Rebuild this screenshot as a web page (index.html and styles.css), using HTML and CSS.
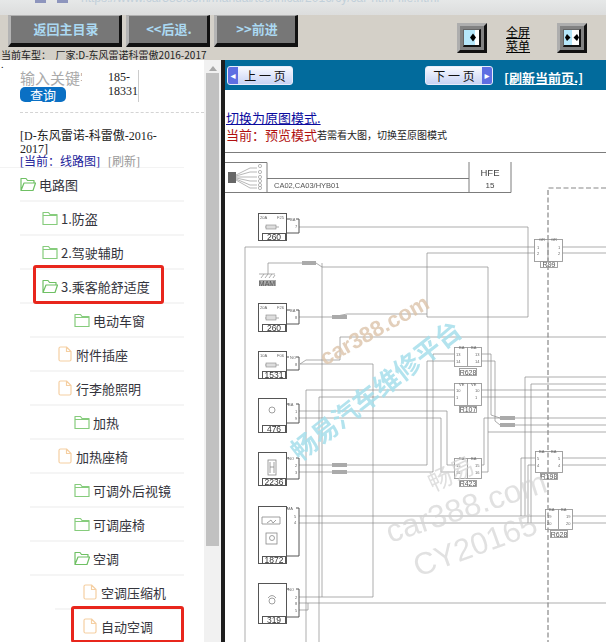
FILE: index.html
```html
<!DOCTYPE html>
<html lang="zh">
<head>
<meta charset="utf-8">
<title>线路图</title>
<link rel="stylesheet" href="styles.css">
</head>
<body>
<svg class="defs" width="0" height="0" aria-hidden="true">
  <symbol id="closed" viewBox="0 0 16 16"><path d="M1 14.500V2.500H6.500L8 4.500H15V14.500Z M1 5.500H15" fill="none" stroke="#86cc7c" stroke-width="1.200" stroke-linejoin="round"/></symbol>
  <symbol id="open" viewBox="0 0 16 16"><path d="M1 14.500V2.500H6L7.500 4.500H14V7 M1 14.500L4 7H15.500L13 14.500Z" fill="none" stroke="#6fc064" stroke-width="1.200" stroke-linejoin="round"/></symbol>
  <symbol id="file" viewBox="0 0 14 16"><path d="M1 2.500Q1 1 2.500 1H8.500L13 5.500V13.500Q13 15 11.500 15H2.500Q1 15 1 13.500Z M8.500 1V5.500H13" fill="none" stroke="#f5cfa2" stroke-width="1.200" stroke-linejoin="round"/></symbol>
</svg>
<div class="page">
  <div class="addr">
    <i class="addr-ico"></i><i class="addr-ico"></i>
    <span class="addr-text">https://www.car388.com/manual/technical/2016/cy/car-html-file.html</span>
  </div>
  <header class="toolbar">
    <div class="tool-left">
      <nav class="btns">
        <a class="btn btn-main">返回主目录</a>
        <a class="btn btn-nav">&lt;&lt;后退.</a>
        <a class="btn btn-nav">&gt;&gt;前进</a>
      </nav>
      <div class="car">当前车型：&nbsp;&nbsp;厂家:D-东风雷诺科雷傲2016-2017</div>
    </div>
    <div class="tool-right">
      <span class="win"><span class="win-in win-one"><svg width="6" height="9" viewBox="0 0 6 9"><path d="M0 4.500L3 0.500L6 4.500L3 8.500Z" fill="#000"/></svg></span></span>
      <a class="full"><span class="full-l">全屏</span><span class="full-l">菜单</span></a>
      <span class="win"><span class="win-in win-two"><svg width="14" height="9" viewBox="0 0 14 9"><path d="M0 4.500L2 1L5.500 4.500L2 8Z M14 4.500L12 1L8.500 4.500L12 8Z" fill="#000"/></svg></span></span>
    </div>
  </header>
  <main class="main">
    <aside class="side">
      <div class="dot">.</div>
      <div class="search">
        <div class="search-l">
          <div class="kw">输入关键字</div>
          <a class="query">查询</a>
        </div>
        <div class="phone">185-<br>18331</div>
      </div>
      <div class="crumb">
        <div class="crumb-t">[D-东风雷诺-科雷傲-2016-2017]</div>
        <div><a class="now">[当前：线路图]</a> <a class="refresh">[刷新]</a></div>
      </div>
      <ul class="tree">
        <li class="row l0"><svg class="ico"><use href="#open"/></svg>电路图</li>
        <li class="row l1"><svg class="ico"><use href="#closed"/></svg>1.防盗</li>
        <li class="row l1"><svg class="ico"><use href="#closed"/></svg>2.驾驶辅助</li>
        <li class="row l1"><svg class="ico"><use href="#open"/></svg>3.乘客舱舒适度<span class="mark mark-a"></span></li>
        <li class="row l2"><svg class="ico"><use href="#closed"/></svg>电动车窗</li>
        <li class="row l3"><svg class="ico-f"><use href="#file"/></svg>附件插座</li>
        <li class="row l3"><svg class="ico-f"><use href="#file"/></svg>行李舱照明</li>
        <li class="row l2"><svg class="ico"><use href="#closed"/></svg>加热</li>
        <li class="row l3"><svg class="ico-f"><use href="#file"/></svg>加热座椅</li>
        <li class="row l2"><svg class="ico"><use href="#closed"/></svg>可调外后视镜</li>
        <li class="row l2"><svg class="ico"><use href="#closed"/></svg>可调座椅</li>
        <li class="row l2"><svg class="ico"><use href="#open"/></svg>空调</li>
        <li class="row l4"><svg class="ico-f"><use href="#file"/></svg>空调压缩机</li>
        <li class="row l4"><svg class="ico-f"><use href="#file"/></svg>自动空调<span class="mark mark-b"></span></li>
      </ul>
    </aside>
    <div class="scroll"><span class="up"></span><span class="thumb"></span></div>
    <div class="split"></div>
    <section class="content">
      <div class="bar">
        <a class="pg pg-prev"><b class="arr">◂</b><span>上 一 页</span></a>
        <a class="pg pg-next"><span>下 一 页</span><b class="arr">▸</b></a>
        <a class="reload">[刷新当前页.]</a>
      </div>
      <a class="switch">切换为原图模式.</a>
      <div class="mode"><span class="mode-r">当前：预览模式</span><span class="mode-s">若需看大图，切换至原图模式</span></div>
      <svg class="dia" width="381" height="490" viewBox="225 152 381 490">
        <g class="frame">
          <path d="M225 152.500H606 M225 162.500H267V192.500H225 M267 178.500H469 M267 192.500H511V162 M469 162V192.500"/>
        </g>
        <g class="conn">
          <rect x="228" y="172" width="8" height="11" fill="#666" stroke="none"/>
          <path d="M236 175L250 168H257 M236 176L250 172H257 M236 177H257 M236 178L250 181H257 M236 179L250 185H257 M236 180L250 188H257"/>
          <circle cx="260" cy="166" r="1.600"/><circle cx="260" cy="172" r="1.600"/><circle cx="260" cy="177" r="1.600"/><circle cx="260" cy="181" r="1.600"/><circle cx="260" cy="185" r="1.600"/><circle cx="260" cy="188" r="1.600"/>
        </g>
        <text class="t7" x="274" y="188">CA02,CA03/HYB01</text>
        <text class="t9" x="490" y="176" text-anchor="middle">HFE</text>
        <text class="t8" x="490" y="188" text-anchor="middle">15</text>

        <g class="wire">
          <path d="M299 227H528V317H427 M427 253V317 M427 253H535 M427 314H347L332 317H299"/>
          <path d="M245 642V247H535 M562 247H606 M562 253H606"/>
          <path d="M268 274V263H302 M316 263L322 267H488V472 M322 263V597H299"/>
          <path d="M300 364L306 360H340V337H606 M300 364H373V597H322"/>
          <path d="M306 642V390H454 M319 642V397H454 M481 390H606 M481 397H606"/>
          <path d="M299 411H447V465H454 M299 418H441V472H454"/>
          <path d="M299 465H332 M347 465H427V361H454 M299 472H332 M347 472H433V354H454"/>
          <path d="M481 354H491V415L500 418H515H606 M481 361H495V421L500 425H515H606"/>
          <path d="M481 465H484V418H500 M481 472H488 M488 432H606"/>
          <path d="M299 516H545 M572 516H606 M299 523H545 M572 523H606"/>
          <path d="M535 458H521V516 M535 465H528V523 M606 377H525V516 M606 384H531V523 M562 458H606 M562 465H606"/>
          <path d="M299 603H606 M299 610H308V603"/>
          <path d="M259 274H275 M261 278L264 274 M265 278L268 274 M269 278L272 274 M273 278L275 275"/>
          <path d="M265 227H279 M265 318H279 M265 365H279"/>
        </g>
        <path class="dash" d="M606 188H548V642"/>

        <g class="box">
          <rect x="258.500" y="213.500" width="28" height="27"/><rect x="262.500" y="233.500" width="23" height="7"/>
          <rect x="258.500" y="303.500" width="28" height="28"/><rect x="262.500" y="324.500" width="23" height="7"/>
          <rect x="258.500" y="351.500" width="28" height="27"/><rect x="262.500" y="371.500" width="23" height="7"/>
          <rect x="258.500" y="398.500" width="28" height="34"/><rect x="262.500" y="425.500" width="23" height="7"/>
          <rect x="258.500" y="452.500" width="28" height="33"/><rect x="262.500" y="478.500" width="23" height="7"/>
          <rect x="258.500" y="506.500" width="28" height="57"/><rect x="262.500" y="556.500" width="23" height="7"/>
          <rect x="258.500" y="583.500" width="28" height="40"/><rect x="262.500" y="616.500" width="23" height="7"/>
          <path d="M286 219H290 M296 219H299V233H286 M286 310H290 M296 310H299V324H286 M286 357H289 M296 357H299V370H286 M286 404H289 M296 404H299V423H286 M286 458H289 M296 458H299V479H286 M286 508H288 M296 508H299V556H286 M286 589H289 M296 589H299V617H286"/>
        </g>
        <g class="boxl">
          <rect x="534.500" y="239.500" width="28" height="22"/><rect x="540.500" y="261.500" width="17" height="6"/>
          <rect x="454.500" y="347.500" width="27" height="19"/><rect x="459.500" y="368.500" width="17" height="7"/><path d="M467.500 347V366"/>
          <rect x="454.500" y="383.500" width="27" height="22"/><rect x="459.500" y="406.500" width="17" height="6"/><path d="M467.500 383V405"/>
          <rect x="454.500" y="458.500" width="27" height="20"/><rect x="459.500" y="480.500" width="17" height="6"/><path d="M467.500 458V478"/>
          <rect x="535.500" y="451.500" width="27" height="21"/><rect x="540.500" y="473.500" width="17" height="6"/>
          <rect x="545.500" y="509.500" width="27" height="20"/><rect x="550.500" y="530.500" width="17" height="7"/><path d="M558.500 509V529"/>
          <path d="M548 239V261"/>
        </g>
        <g class="chip">
          <rect x="302" y="261" width="14" height="4"/><rect x="332" y="315" width="15" height="4"/>
          <rect x="332" y="463" width="15" height="4"/><rect x="332" y="470" width="15" height="4"/>
          <rect x="500" y="416" width="15" height="4"/><rect x="500" y="423" width="15" height="4"/>
          <rect x="259" y="280" width="17" height="6"/>
        </g>
        <rect class="fuse" x="266" y="225" width="10" height="4"/>
        <rect class="fuse" x="266" y="315" width="10" height="5"/>
        <rect class="fuse" x="266" y="363" width="10" height="4"/>
        <g class="sym">
          <circle cx="272" cy="410" r="3"/>
          <rect x="268" y="460" width="8" height="15"/><path d="M270 462V473 M274 462V473 M270 467H274"/>
          <path d="M262 517H280V524H262Z M267 523L271 520L273 523L276 520"/>
          <rect x="266" y="533" width="11" height="11"/><circle cx="272" cy="538" r="2.500"/>
          <circle cx="272" cy="601" r="3"/><path d="M268 598Q272 593 276 598"/>
        </g>
        <g class="t5">
          <text x="260" y="219">20A</text><text x="277" y="219">F25</text>
          <text x="260" y="309">20A</text><text x="277" y="309">F26</text>
          <text x="260" y="357">10A</text><text x="277" y="357">F06</text>
          <text x="290" y="221">BA</text><text x="290" y="312">BA</text><text x="290" y="359">NO</text>
          <text x="288" y="406">BA</text><text x="288" y="460">NO</text><text x="287" y="510">MA</text><text x="288" y="591">NO</text>
          <text x="295" y="228">7</text><text x="295" y="319">8</text><text x="295" y="366">8</text>
          <text x="295" y="413">1</text><text x="295" y="420">9</text><text x="295" y="467">2</text><text x="295" y="474">3</text>
          <text x="294" y="518">5</text><text x="294" y="524">4</text><text x="295" y="599">2</text><text x="295" y="605">8</text><text x="295" y="612">5</text>
          <text x="456" y="356">13</text><text x="456" y="363">14</text><text x="475" y="356">13</text><text x="475" y="363">14</text>
          <text x="456" y="392">10</text><text x="456" y="399">1</text><text x="475" y="392">10</text><text x="475" y="399">1</text>
          <text x="456" y="467">15</text><text x="456" y="474">16</text><text x="475" y="467">15</text><text x="475" y="474">16</text>
          <text x="537" y="460">5</text><text x="537" y="467">4</text><text x="558" y="460">5</text><text x="558" y="467">4</text>
          <text x="547" y="518">19</text><text x="547" y="525">20</text><text x="566" y="518">19</text><text x="566" y="525">20</text>
          <text x="537" y="249">1</text><text x="537" y="255">2</text><text x="558" y="249">1</text><text x="558" y="255">2</text>
          <text x="539" y="241">GR</text><text x="551" y="241">GR</text>
          <text x="459" y="349">BA</text><text x="471" y="349">BA</text>
          <text x="459" y="386">VE</text><text x="471" y="386">VE</text>
          <text x="459" y="460">BA</text><text x="471" y="460">BA</text>
          <text x="539" y="453">BA</text><text x="551" y="453">BA</text>
          <text x="549" y="511">BA</text><text x="561" y="511">BA</text>
        </g>
        <g class="lab">
          <text x="274" y="240">260</text><text x="274" y="331">260</text><text x="274" y="378">1531</text>
          <text x="274" y="432">476</text><text x="274" y="485">2236</text><text x="274" y="563">1872</text><text x="274" y="623">319</text>
          <text class="lab-s" x="267" y="286">MAM</text><text class="lab-s" x="549" y="267">R99</text><text class="lab-s" x="468" y="375">R628</text>
          <text class="lab-s" x="468" y="412">R107</text><text class="lab-s" x="468" y="486">R423</text><text class="lab-s" x="549" y="479">R198</text><text class="lab-s" x="559" y="537">R628</text>
        </g>
        <text class="wm-tan" transform="translate(325 366) rotate(-29)">car388.com</text>
        <text class="wm-blue" transform="translate(300 462) rotate(-38)">畅易汽车维修平台</text>
        <text class="wm-g1" transform="translate(433 492) rotate(-25)">畅易</text>
        <text class="wm-g2" transform="translate(390 543) rotate(-18)">car388.com</text>
        <text class="wm-g3" transform="translate(418 577) rotate(-20)">CY20165</text>
      </svg>
    </section>
  </main>
</div>
</body>
</html>
```

FILE: styles.css
```css
* { box-sizing: border-box; }
html, body { margin: 0; padding: 0; }
body { font-family: "Liberation Serif", "Noto Sans CJK SC", serif; background: #fff; }
.defs { position: absolute; }
.page { width: 606px; height: 642px; overflow: hidden; display: flex; flex-direction: column; }

.addr { height: 15px; flex: none; overflow: hidden; display: flex; align-items: flex-start; gap: 11px; padding-left: 35px; background: linear-gradient(#e6e8e8, #dcdddd); }
.addr-ico { display: block; width: 11px; height: 3px; background: #8d95bd; flex: none; }
.addr-text { margin: -8px 0 0 2px; font: 12px/12px "Liberation Sans", sans-serif; color: #c2d0da; white-space: nowrap; }

.toolbar { height: 45px; flex: none; background: #d4d0c8; display: flex; justify-content: space-between; }
.tool-left { display: flex; flex-direction: column; min-width: 0; }
.btns { display: flex; gap: 4px; padding-left: 8px; }
.btn { height: 32px; display: flex; align-items: center; justify-content: center; background: #777; border-style: solid; border-width: 1px 3px 4px 3px; border-color: #b0b0b0 #111 #111 #b4b4b4; color: #abd9f2; font: bold 13px/1 "Noto Sans CJK SC", sans-serif; padding: 0 0 2px 2px; }
.btn-main { width: 114px; }
.btn-nav { width: 84px; }
.car { margin-top: 2px; padding-left: 1px; height: 11px; font: 10px/11px "Noto Sans CJK SC", sans-serif; color: #222; white-space: nowrap; }
.tool-right { display: flex; align-items: flex-start; padding: 8px 19px 0 0; }
.win { width: 30px; height: 30px; display: block; background: #828282; border-style: solid; border-width: 3px; border-color: #aeaeae #111 #111 #aeaeae; padding: 3px; }
.win-in { width: 100%; height: 100%; display: flex; align-items: center; justify-content: center; border-style: solid; border-width: 1px 2px 2px 1px; border-color: #666 #111 #111 #666; }
.win-one { background: linear-gradient(90deg, #b6e7fa 74%, #fff 74%); padding-left: 3px; }
.win-two { background: linear-gradient(90deg, #b6e7fa 50%, #fff 50%); }
.win-in svg { flex: none; }
.full { width: 25px; margin: 2px 26px 0 19px; font: 12px/13px "Noto Sans CJK SC", sans-serif; color: #000; }
.full-l { display: block; height: 14px; text-decoration: underline; }

.main { flex: 1; display: flex; min-height: 0; }
.side { width: 204px; flex: none; overflow: hidden; position: relative; background: #fff; }
.dot { height: 10px; padding-left: 1px; font-size: 10px; line-height: 10px; color: #000; }
.search { height: 42px; margin-left: 20px; display: flex; }
.search-l { width: 88px; flex: none; }
.kw { width: 62px; height: 17px; overflow: hidden; white-space: nowrap; font: 15px/16px "Noto Sans CJK SC", sans-serif; color: #aaa; }
.query { display: block; width: 46px; height: 15px; background: #0a70c4; border-radius: 5px; color: #fff; text-align: center; font: 13px/15px "Noto Sans CJK SC", sans-serif; }
.phone { width: 31px; font-size: 12px; line-height: 14px; color: #222; border-right: 1px solid #ccc; height: 32px; }
.crumb { margin-left: 20px; width: 184px; padding-top: 17px; border-top: 1px dashed #d4d4d4; font-size: 12px; line-height: 13px; color: #222; height: 55px; }
.crumb-t { width: 142px; }
.now { color: #22229a; }
.refresh { color: #999; margin-left: 5px; }

.tree { list-style: none; margin: 0; padding: 0; width: 184px; border-top: 1px solid #f3f3f3; }
.row { position: relative; height: 34px; display: flex; align-items: center; font: 13px/1 "Noto Sans CJK SC", sans-serif; color: #34343c; border-bottom: 2px solid #f5f5f5; }
.ico { width: 16px; height: 16px; margin-right: 3px; flex: none; }
.ico-f { width: 14px; height: 16px; margin-right: 4px; flex: none; }
.l0 { margin-left: 20px; }
.l1 { margin-left: 20px; padding-left: 22px; }
.l2 { margin-left: 30px; padding-left: 44px; }
.l3 { margin-left: 30px; padding-left: 28px; }
.l4 { margin-left: 55px; padding-left: 28px; }
.mark { position: absolute; border: 3px solid #e8261c; border-radius: 3px; }
.mark-a { left: 13px; right: 20px; top: -5px; bottom: -2px; }
.mark-b { left: 16px; right: 0; top: -4px; bottom: -1px; }

.scroll { width: 17px; flex: none; background: #f1f1f1; padding: 0 2px; }
.up { display: block; width: 0; height: 0; margin: 6px auto 0; border: 4px solid transparent; border-top: 0; border-bottom: 5px solid #a8a8a8; }
.thumb { display: block; height: 473px; margin-top: 2px; width: 13px; background: #c1c1c1; }
.split { width: 4px; flex: none; background: #1d1d1d; }

.content { flex: 1; min-width: 0; background: #fff; display: flex; flex-direction: column; }
.bar { height: 30px; flex: none; background: #026b9c; display: flex; align-items: flex-start; padding: 6px 0 0 2px; }
.pg { height: 19px; display: flex; align-items: center; justify-content: space-between; border: 1px solid #e8ecfa; border-radius: 3px; background: linear-gradient(#f8f9ff, #c8d3f4); color: #111; font: 12px/1 "Noto Sans CJK SC", sans-serif; overflow: hidden; }
.pg span { flex: 1; text-align: center; }
.arr { width: 10px; height: 100%; flex: none; display: flex; align-items: center; justify-content: center; background: #5f6ee2; color: #fff; font: 10px/1 "DejaVu Sans", sans-serif; }
.pg-prev { width: 66px; }
.pg-next { width: 68px; margin-left: 132px; }
.reload { margin: 4px 0 0 11px; color: #fff; font: bold 13px/16px "Noto Sans CJK SC", sans-serif; text-decoration: underline; white-space: nowrap; }
.switch { margin: 20px 0 0 1px; font: 13px/16px "Noto Sans CJK SC", sans-serif; color: #0b0b9e; text-decoration: underline; align-self: flex-start; }
.mode { margin: 2px 0 0 1px; height: 14px; display: flex; align-items: center; white-space: nowrap; }
.mode-r { font: 13px/14px "Noto Sans CJK SC", sans-serif; color: #b01010; }
.mode-s { font: 10px/14px "Noto Sans CJK SC", sans-serif; color: #222; }
.dia { display: block; flex: none; margin-top: 10px; filter: blur(.35px); }

.frame path { fill: none; stroke: #7c7c7c; stroke-width: 1; }
.conn path, .conn circle { fill: none; stroke: #999; stroke-width: .7; }
.wire path { fill: none; stroke: #8a8a8a; stroke-width: .7; }
.dash { fill: none; stroke: #888; stroke-width: 1.200; stroke-dasharray: 5 2.500; }
.box rect, .box path { fill: none; stroke: #555; stroke-width: 1; }
.boxl rect, .boxl path { fill: none; stroke: #999; stroke-width: .9; }
.chip rect { fill: #aaa; stroke: none; }
.fuse { fill: #ddd; stroke: #888; stroke-width: .6; }
.sym rect, .sym circle, .sym path { fill: none; stroke: #888; stroke-width: .8; }
text { font-family: "Liberation Sans", "Noto Sans CJK SC", sans-serif; }
.t7 { font-size: 7.500px; fill: #555; }
.t8 { font-size: 8px; fill: #444; }
.t9 { font-size: 9.500px; fill: #444; }
.t5 text { font-size: 4px; fill: #666; }
.lab text { font-size: 8.500px; fill: #333; text-anchor: middle; }
.lab .lab-s { font-size: 7px; fill: #555; }
.wm-tan { font-size: 22px; font-weight: bold; fill: #dcc4aa; opacity: .8; }
.wm-blue { font-size: 26px; font-weight: bold; fill: #a6dfeb; opacity: .85; }
.wm-g1 { font-size: 24px; fill: #d2d2d2; opacity: .7; }
.wm-g2 { font-size: 32px; fill: #d2d2d2; opacity: .65; }
.wm-g3 { font-size: 31px; fill: #d2d2d2; opacity: .65; }
```
